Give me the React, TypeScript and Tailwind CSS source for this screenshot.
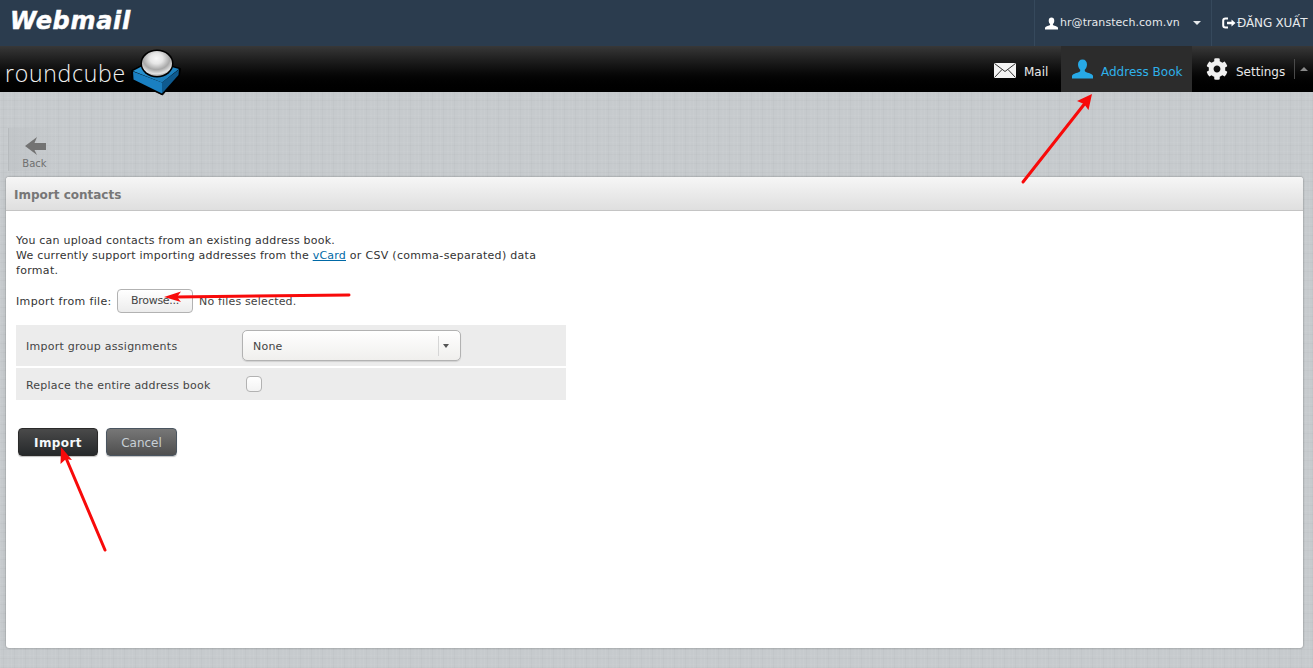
import React from "react";
import { FaCog } from "react-icons/fa";

const font = "font-['DejaVu_Sans',sans-serif]";

function Person({ className }: { className: string }) {
  return (
    <svg viewBox="0 0 22 20" className={className} fill="currentColor">
      <path d="M11 0c3 0 4.700 2.200 4.700 5.200 0 2.400-1 4.300-2.300 5.500v1.300c.6 1 2.400 1.500 4.400 2.300 2.300.9 3.700 1.900 4.200 2.900V20H0v-2.800c.5-1 1.900-2 4.200-2.900 2-.8 3.800-1.300 4.400-2.300v-1.300C7.300 9.500 6.300 7.600 6.300 5.200 6.300 2.200 8 0 11 0z" />
    </svg>
  );
}

function Logo() {
  return (
    <svg viewBox="0 0 50 46" className="absolute left-[131px] top-[49px] h-[47px] w-[50px]">
      <defs>
        <radialGradient id="dome" cx="48%" cy="30%" r="72%">
          <stop offset="0" stopColor="#f8f8f8" />
          <stop offset="0.3" stopColor="#e6e6e6" />
          <stop offset="0.62" stopColor="#a8a8a8" />
          <stop offset="0.85" stopColor="#e4e4e4" />
          <stop offset="1" stopColor="#8c8c8c" />
        </radialGradient>
        <linearGradient id="topf" x1="0" y1="0" x2="1" y2="1">
          <stop offset="0" stopColor="#2f9fdd" />
          <stop offset="1" stopColor="#1373b3" />
        </linearGradient>
      </defs>
      <path d="M0.500 21 L20 11 L49.500 19 L48.500 26 L31.500 45.500 L1 31 Z" fill="#000" stroke="#000" strokeWidth="1" strokeLinejoin="round" />
      <path d="M2 22 L31 33 L31 44 L2.500 30 Z" fill="#1a80c2" />
      <path d="M31 33 L48 20 L47.500 25.500 L31 44 Z" fill="#0e5a8f" />
      <path d="M2 21.500 L20 12 L48 19.500 L31 33 Z" fill="url(#topf)" />
      <ellipse cx="26" cy="14" rx="16.500" ry="14" fill="#000" />
      <ellipse cx="26" cy="14" rx="15" ry="12.500" fill="url(#dome)" />
    </svg>
  );
}

function Arrows() {
  const arrow = "#f80a0a";
  return (
    <svg className="absolute left-0 top-0 h-[668px] w-[1313px] pointer-events-none" viewBox="0 0 1313 668">
      <g stroke={arrow} strokeWidth="3" strokeLinecap="round" fill={arrow}>
        <line x1="1023" y1="182" x2="1086" y2="102" />
        <line x1="349" y1="295" x2="175" y2="297" />
        <line x1="105" y1="550" x2="66" y2="458" />
      </g>
      <g fill={arrow}>
        <polygon points="1092,94 1088.500,110 1084,104 1077,101" />
        <polygon points="164,297 181,291.500 177,297 181,302" />
        <polygon points="61,447 72,460 66,459 60.500,464" />
      </g>
    </svg>
  );
}

export default function App() {
  return (
    <div
      className={`${font} relative flex h-[668px] w-full flex-col overflow-hidden bg-[#c6cacd] bg-[repeating-linear-gradient(90deg,rgba(255,255,255,0.05)_0px,rgba(255,255,255,0.05)_1px,transparent_1px,transparent_3px,rgba(0,0,0,0.02)_3px,rgba(0,0,0,0.02)_4px,transparent_4px,transparent_7px,rgba(255,255,255,0.03)_7px,rgba(255,255,255,0.03)_9px,transparent_9px,transparent_11px),repeating-linear-gradient(0deg,rgba(0,0,0,0.02)_0px,rgba(0,0,0,0.02)_1px,transparent_1px,transparent_3px,rgba(255,255,255,0.04)_3px,rgba(255,255,255,0.04)_4px,transparent_4px,transparent_9px)]`}
    >
      {/* Top bar */}
      <header className="flex h-[46px] shrink-0 items-center justify-between bg-[#2b3c4e] text-white">
        <div className="pl-[10px] pb-[4px] text-[24px] leading-none font-bold italic tracking-[0.7px] text-white [-webkit-text-stroke:0.5px_white]">
          Webmail
        </div>
        <div className="flex h-full items-stretch">
          <div className="flex w-[177px] items-center border-l border-[#36495c] pl-[10px]">
            <Person className="h-[13px] w-[13px] shrink-0 text-white" />
            <span className="ml-[2px] text-[11px] tracking-[0.05px] text-[#e6e9ec]">hr@transtech.com.vn</span>
            <span className="ml-[13px] h-0 w-0 border-x-[4px] border-t-[4px] border-x-transparent border-t-[#e6e9ec]" />
          </div>
          <div className="flex w-[102px] items-center border-l border-[#36495c] pl-[10px] text-[12px] tracking-[-0.2px] text-[#e6e9ec]">
            <svg viewBox="0 0 14 12" className="h-[12px] w-[14px] shrink-0" fill="none" stroke="white">
              <path d="M6 1.500H3.500A2.300 2.300 0 0 0 1.200 3.800v4.400a2.300 2.300 0 0 0 2.300 2.300H6" strokeWidth="2" />
              <path d="M5 4.800h4.500V2.500L13.500 6 9.500 9.500V7.200H5z" fill="white" stroke="none" />
            </svg>
            <span className="ml-[1px] whitespace-nowrap">ĐĂNG XUẤT</span>
          </div>
        </div>
      </header>

      {/* Nav bar */}
      <nav className="relative flex h-[46px] shrink-0 items-stretch justify-between bg-gradient-to-b from-[#383838] to-[#000000]">
        <div className="pl-[5px] pt-[11px] font-['Open_Sans',sans-serif] text-[23px] leading-[32px] font-light tracking-[0.75px] text-[#f0f0f0]">
          roundcube
        </div>
        <div className="flex items-stretch text-[12px]">
          <div className="flex w-[67px] items-center pt-[5px] text-[#e8e8e8]">
            <svg viewBox="0 0 22 15" className="h-[15px] w-[22px] shrink-0 -translate-y-[1px]">
              <rect x="0" y="0" width="22" height="15" rx="0.500" fill="#f4f4f4" />
              <path d="M0.500 0.500 L11 8.500 L21.500 0.500 M0.500 14.500 L8 6.500 M21.500 14.500 L14 6.500" fill="none" stroke="#333" strokeWidth="1" />
            </svg>
            <span className="ml-[8px]">Mail</span>
          </div>
          <div className="flex w-[131px] items-center bg-[#2c2c2c] pl-[11px] pt-[5px] text-[#2fb1ea]">
            <Person className="h-[20px] w-[21px] shrink-0 -translate-y-[3px] text-[#27a9e6]" />
            <span className="ml-[8px]">Address Book</span>
          </div>
          <div className="flex w-[121px] items-center pl-[14px] pt-[5px] text-[#e8e8e8]">
            <FaCog className="h-[22px] w-[22px] shrink-0 -translate-y-[3px] text-[#f0f0f0]" />
            <span className="ml-[8px]">Settings</span>
            <span className="ml-[9px] h-[20px] w-px -translate-y-[3px] bg-[#4a4a4a]" />
            <span className="ml-[5px] h-0 w-0 -translate-y-[3px] border-x-[4px] border-b-[4px] border-x-transparent border-b-[#8a8a8a]" />
          </div>
        </div>
      </nav>
      <Logo />

      {/* Toolbar */}
      <div className="flex h-[85px] shrink-0 items-end pb-[6px] pl-[8px]">
        <div className="flex h-[43px] w-[52px] flex-col items-center border-l border-[#b6babd] bg-gradient-to-r from-[#bcc0c3]/50 to-transparent">
          <svg viewBox="0 0 22 18" className="mt-[9px] ml-[2px] h-[18px] w-[22px] shrink-0" fill="#737373">
            <path d="M0 9 L12 0 L9.500 6 L21 6 L21 13 L9.500 13 L12 18 Z" />
          </svg>
          <span className="mt-[3px] text-[10px] leading-[12px] text-[#6f6f6f]">Back</span>
        </div>
      </div>

      {/* Panel */}
      <main className="ml-[6px] mr-[10px] flex h-[471px] flex-col rounded-[3px] bg-white shadow-[0_0_2px_rgba(0,0,0,0.45)]">
        <div className="flex h-[34px] shrink-0 items-center rounded-t-[3px] border-b border-[#c4c4c4] bg-gradient-to-b from-[#f6f6f6] to-[#dfdfdf] pl-[8px] pt-[2px] text-[12px] font-bold text-[#777777]">
          Import contacts
        </div>
        <div className="pl-[10px] pt-[22px] text-[11px] tracking-[0.22px] text-[#333333]">
          <p className="w-[550px] leading-[15px]">
            You can upload contacts from an existing address book.
            <br />
            We currently support importing addresses from the <a className="text-[#0069a6] underline">vCard</a>
            <span className="tracking-[0.3px]"> or CSV (comma-separated) data format.</span>
          </p>

          <div className="mt-[10px] flex h-[26px] items-center">
            <span className="w-[101px] pt-[2px] tracking-[0.36px]">Import from file:</span>
            <button className="flex h-[24px] w-[76px] items-center justify-center rounded-[4px] border border-[#b2b2b2] bg-gradient-to-b from-[#ffffff] to-[#ececec] pt-[1px] text-[11px] tracking-[-0.3px] text-[#444444]">
              Browse...
            </button>
            <span className="ml-[6px] pt-[2px] tracking-[0.17px] text-[#444444]">No files selected.</span>
          </div>

          <div className="mt-[11px] w-[550px]">
            <div className="flex h-[41px] items-center bg-[#ececec] pl-[10px]">
              <span className="w-[216px] pt-[3px] tracking-[0.26px] text-[#444444]">Import group assignments</span>
              <div className="flex h-[31px] w-[219px] items-center justify-between rounded-[5px] border border-[#b2b2b2] bg-gradient-to-b from-[#ffffff] to-[#f0efed] pl-[10px] shadow-[0_1px_1px_rgba(0,0,0,0.12)]">
                <span className="pt-[3px] text-[#444444]">None</span>
                <div className="mr-[5px] flex h-[20px] w-[17px] items-center justify-center border-l border-[#d6d6d6]">
                  <span className="ml-[-3px] h-0 w-0 border-x-[3px] border-t-[4px] border-x-transparent border-t-[#555555]" />
                </div>
              </div>
            </div>
            <div className="mt-[2px] flex h-[32px] items-center bg-[#ececec] pl-[10px]">
              <span className="w-[220px] whitespace-nowrap pt-[4px] text-[#444444]">Replace the entire address book</span>
              <input
                type="checkbox"
                readOnly
                className="h-[16px] w-[16px] appearance-none rounded-[4px] border border-[#b2b2b2] bg-gradient-to-b from-[#ffffff] to-[#f3f3f3]"
              />
            </div>
          </div>

          <div className="mt-[28px] ml-[2px] flex gap-[8px] tracking-normal">
            <button className="flex h-[28px] w-[80px] items-center justify-center rounded-[4px] border border-[#2a2a2a] bg-gradient-to-b from-[#4a4a4a] to-[#26292b] pt-[2px] text-[12px] font-bold tracking-[0.4px] text-[#f4f8fb] shadow-[0_1px_1px_rgba(0,0,0,0.25)]">
              Import
            </button>
            <button className="flex h-[28px] w-[71px] items-center justify-center rounded-[4px] border border-[#4a5560] bg-gradient-to-b from-[#777777] to-[#4f4f4f] pt-[2px] text-[12px] text-[#c8d0d6] shadow-[0_1px_1px_rgba(0,0,0,0.25)]">
              Cancel
            </button>
          </div>
        </div>
      </main>

      <Arrows />
    </div>
  );
}
